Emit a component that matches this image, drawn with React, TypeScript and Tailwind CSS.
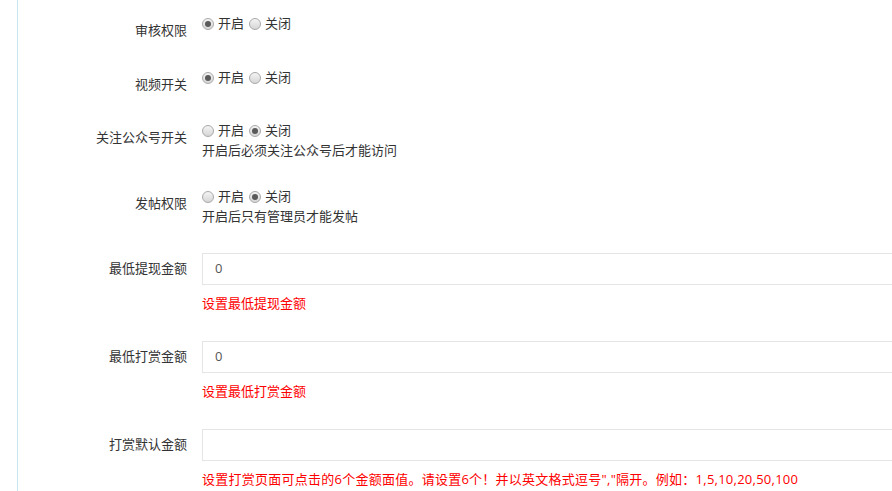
import React from "react";

const font = { fontFamily: '"Open Sans", "Noto Sans CJK SC", "Microsoft YaHei", sans-serif' };

function Radio({ checked }: { checked: boolean }) {
  return (
    <span className="inline-flex items-center justify-center w-[12px] h-[12px] rounded-full border border-[#a9a9a9] bg-gradient-to-b from-[#f4f4f4] to-[#d6d6d6] shrink-0">
      {checked && <span className="block w-[6px] h-[6px] rounded-full bg-[#5a5a5a]" />}
    </span>
  );
}

function RadioGroup({ on }: { on: boolean }) {
  return (
    <div className="flex items-center h-[20px] text-[13px] text-[#333]">
      <Radio checked={on} />
      <span className="ml-[4px]">开启</span>
      <span className="ml-[5px] flex items-center"><Radio checked={!on} /></span>
      <span className="ml-[4px]">关闭</span>
    </div>
  );
}

function RadioRow({ label, on, help, mt }: { label: string; on: boolean; help?: string; mt: string }) {
  return (
    <div className={`flex items-start ${mt}`}>
      <div className="w-[169px] shrink-0 text-right text-[13px] leading-[20px] text-[#333] relative top-[6px]">{label}</div>
      <div className="ml-[15px]">
        <RadioGroup on={on} />
        {help && <div className="text-[13px] leading-[20px] text-[#333] -mt-[1px]">{help}</div>}
      </div>
    </div>
  );
}

function InputRow({ label, value, help, mt, wide }: { label: string; value: string; help: string; mt: string; wide?: boolean }) {
  return (
    <div className={`flex items-start ${mt}`}>
      <div className="w-[169px] shrink-0 text-right text-[13px] leading-[20px] text-[#333] relative top-[5px]">{label}</div>
      <div className="ml-[15px] w-[760px] shrink-0">
        <div className="h-[32px] border border-[#e5e5e5] bg-white flex items-center px-[12px] text-[13px] text-[#555]">
          {value}
        </div>
        <div className={`mt-[8px] text-[13px] leading-[20px] text-[#ff0000] whitespace-nowrap ${wide ? "tracking-[0.25px]" : ""}`}>{help}</div>
      </div>
    </div>
  );
}

export default function App() {
  return (
    <div className="w-[892px] h-[491px] overflow-hidden bg-white flex" style={font}>
      <div className="w-[17px] shrink-0" />
      <div className="border-l border-[#c6e7ee] h-full flex-1 min-w-0 overflow-hidden">
        <div className="pt-[14px]">
          <RadioRow label="审核权限" on={true} mt="mt-0" />
          <RadioRow label="视频开关" on={true} mt="mt-[34px]" />
          <RadioRow label="关注公众号开关" on={false} help="开启后必须关注公众号后才能访问" mt="mt-[33px]" />
          <RadioRow label="发帖权限" on={false} help="开启后只有管理员才能发帖" mt="mt-[27px]" />
          <InputRow label="最低提现金额" value="0" help="设置最低提现金额" mt="mt-[27px]" />
          <InputRow label="最低打赏金额" value="0" help="设置最低打赏金额" mt="mt-[28px]" />
          <InputRow
            label="打赏默认金额"
            value=""
            help={'设置打赏页面可点击的6个金额面值。请设置6个！并以英文格式逗号","隔开。例如：1,5,10,20,50,100'}
            mt="mt-[28px]"
            wide
          />
        </div>
      </div>
    </div>
  );
}
